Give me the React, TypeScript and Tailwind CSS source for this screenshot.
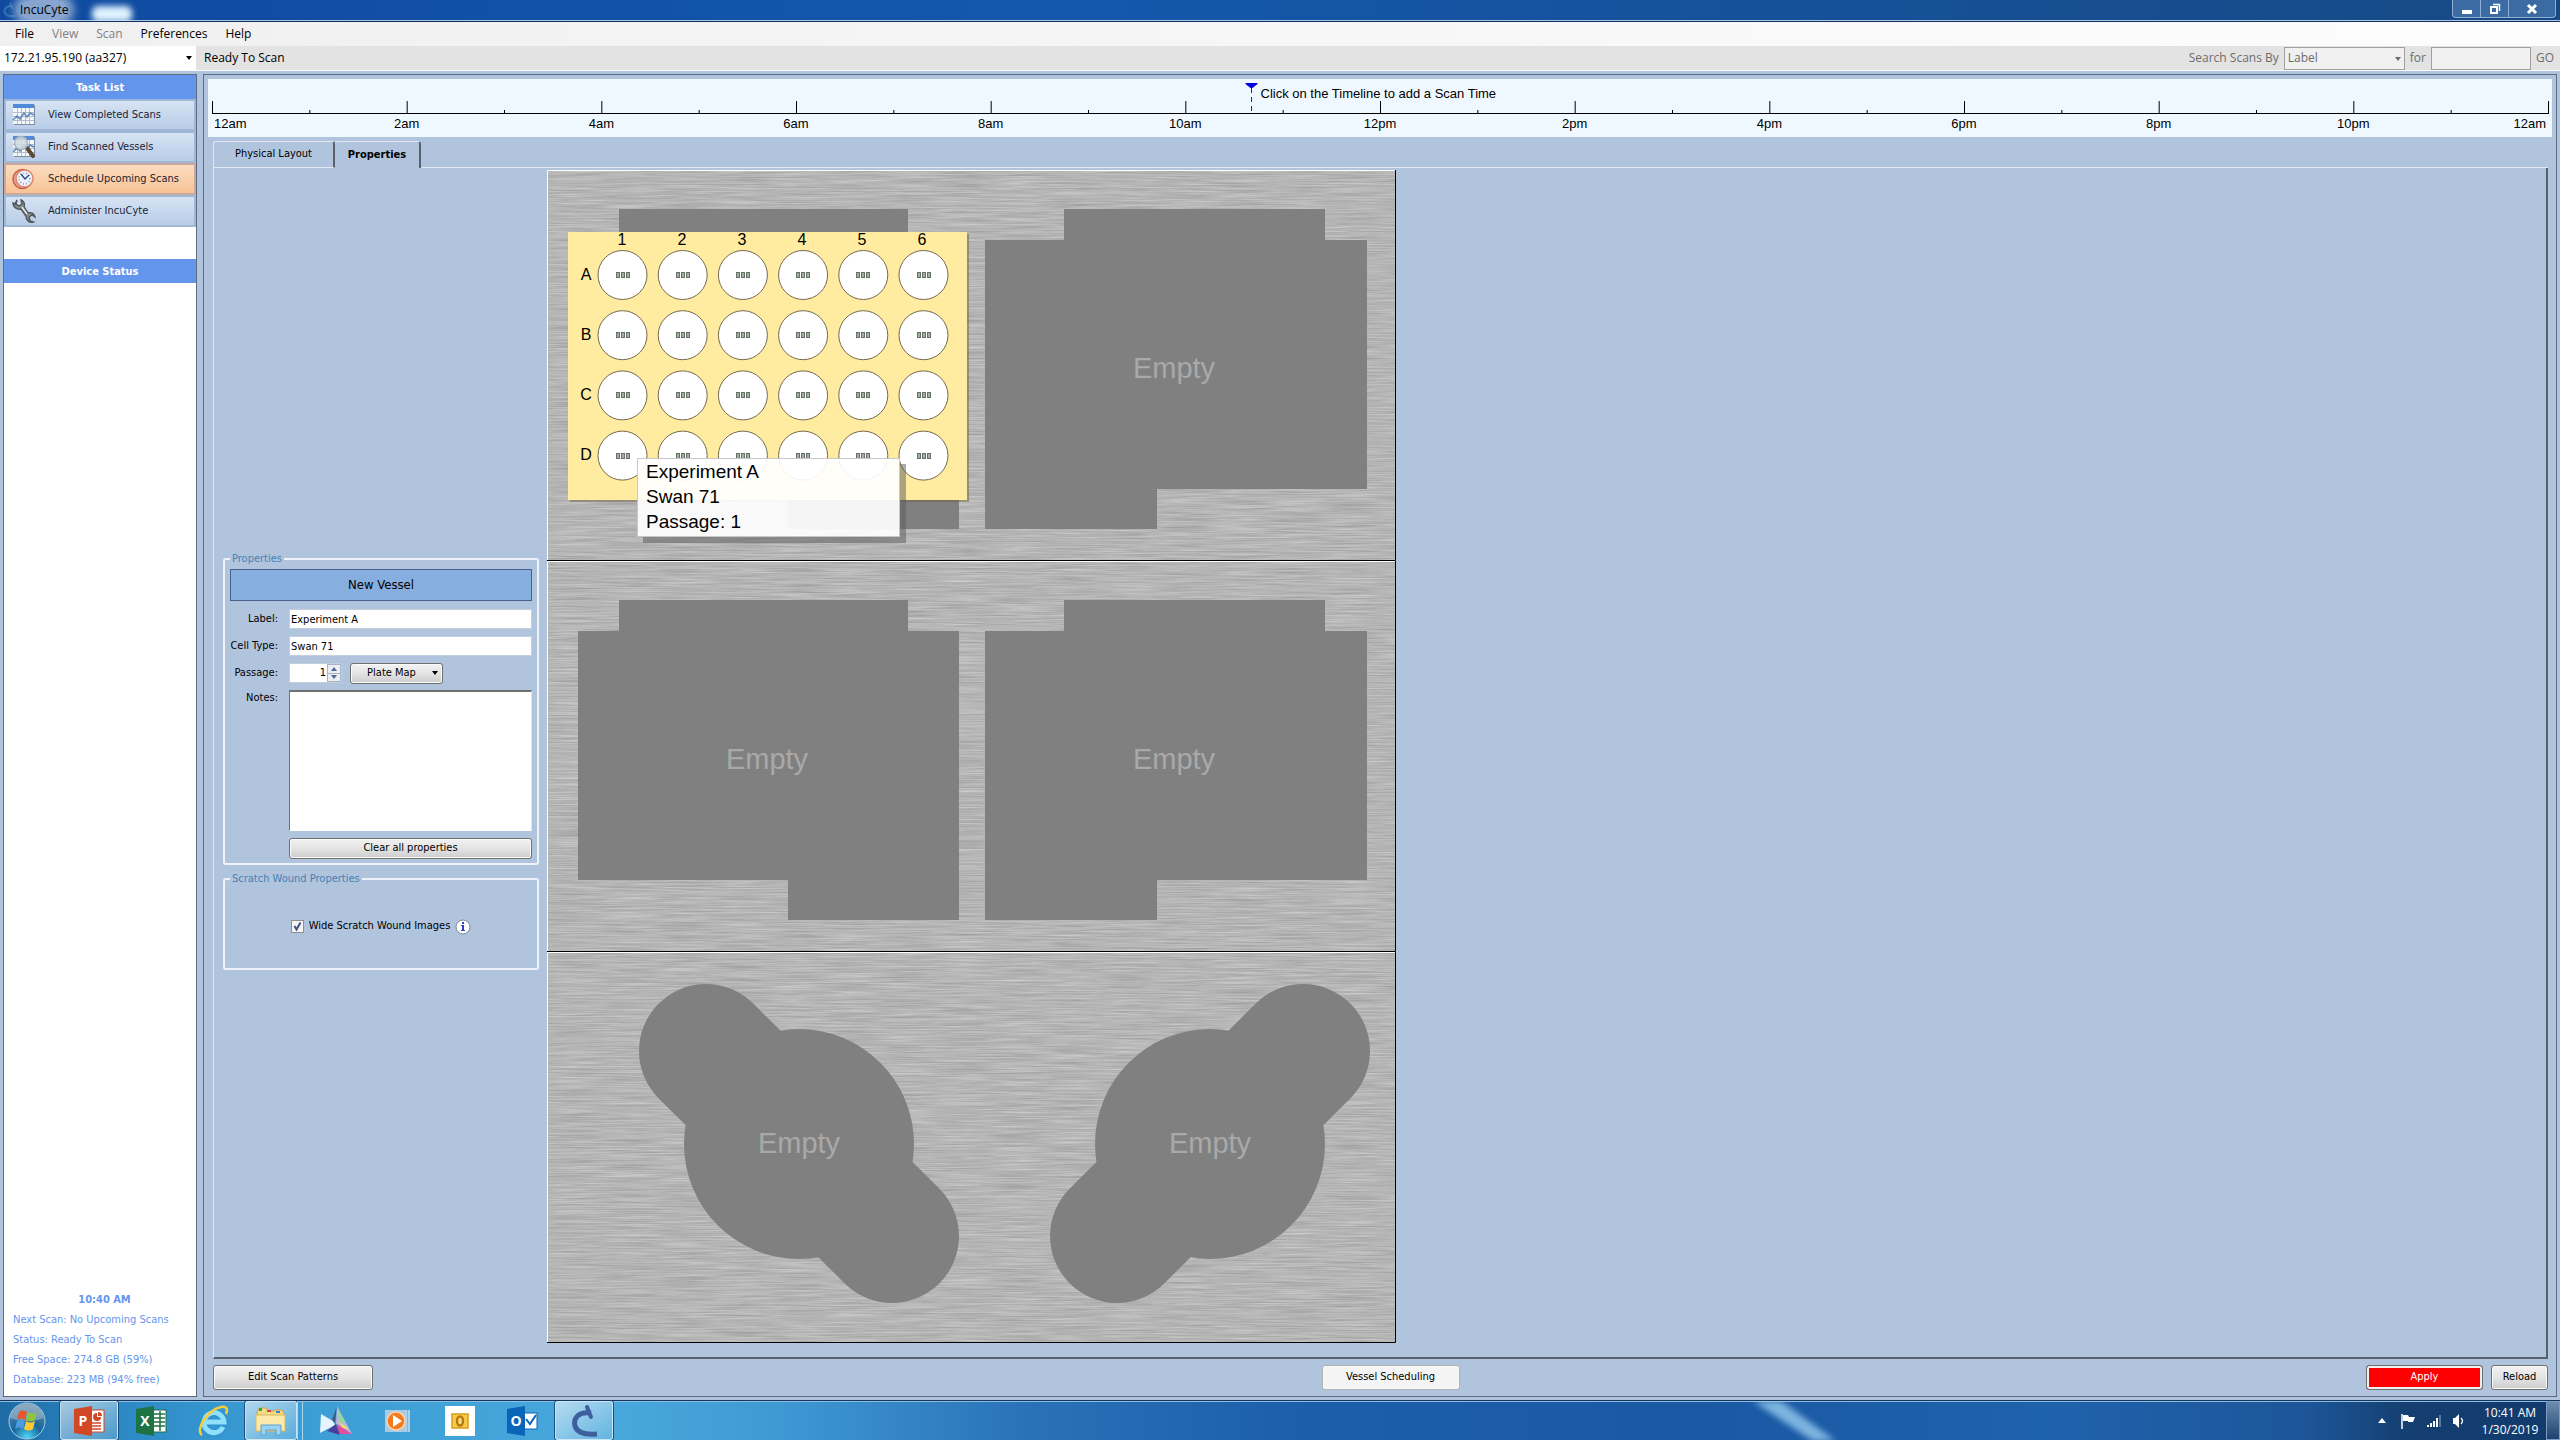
import React, { useState } from 'react';
import { cva } from 'class-variance-authority';
import { clsx } from 'clsx';

const buttonVariants = cva(
  'flex items-center justify-center rounded-[3px] border border-[#707070] shadow-[inset_0_0_0_1px_#fafafa] text-black',
  {
    variants: {
      variant: {
        default: 'bg-linear-to-b from-[#f2f2f2] via-[#e4e4e4] via-50% to-[#cdcdcd]',
        pale: 'bg-[#f4f4f4] border-[#adb2b5] text-[#444]',
        danger: 'bg-[#ff0000] text-white border-[#707070] shadow-[inset_0_0_0_2px_#f0f0f0]',
      },
    },
    defaultVariants: { variant: 'default' },
  }
);

const TAHOMA = "font-['DejaVu_Sans_Condensed','DejaVu_Sans',sans-serif]";
const SEGOE = "font-['Open_Sans','Noto_Sans',sans-serif]";
const ARIAL = "font-['Liberation_Sans',Arial,sans-serif]";

const MENUS = [
  { label: 'File', enabled: true },
  { label: 'View', enabled: false },
  { label: 'Scan', enabled: false },
  { label: 'Preferences', enabled: true },
  { label: 'Help', enabled: true },
];

const STATUS_LINES = [
  'Next Scan: No Upcoming Scans',
  'Status: Ready To Scan',
  'Free Space: 274.8 GB (59%)',
  'Database: 223 MB (94% free)',
];

const HOURS = Array.from({ length: 25 }, (_, i) => i);
const WELL_ROWS = ['A', 'B', 'C', 'D'];
const WELL_COLS = [1, 2, 3, 4, 5, 6];

const hourLabel = (hour: number) => {
  const h = hour % 12 === 0 ? 12 : hour % 12;
  return `${h}${hour % 24 < 12 ? 'am' : 'pm'}`;
};

/* ---------- Icons ---------- */

const ChartIcon: React.FC<{ magnifier?: boolean }> = ({ magnifier }) => (
  <svg width="24" height="24" viewBox="0 0 24 24" className="shrink-0">
    <rect x="2" y="2" width="21" height="20" fill="#7f8da0" />
    <rect x="1" y="1" width="21" height="20" fill="#f4f7fb" />
    <rect x="1" y="1" width="21" height="4" fill="#4f8bd8" />
    <path
      d="M1 9.5H22M1 13.5H22M1 17.5H22M5.5 5V21M9.5 5V21M13.5 5V21M17.5 5V21"
      stroke="#b4bccb"
      strokeWidth="1"
    />
    <path d="M1 17L5 13L8 16L12 10L15 14L18 10L22 12" fill="none" stroke="#5e86b8" strokeWidth="1.5" />
    {magnifier && (
      <>
        <path d="M15 13L21 21" stroke="#5c4a38" strokeWidth="4" strokeLinecap="round" />
        <circle cx="9" cy="8" r="6.5" fill="#cfdbe0" fillOpacity="0.85" stroke="#a9b4b8" strokeWidth="1.5" />
      </>
    )}
  </svg>
);

const ClockIcon = () => (
  <svg width="24" height="24" viewBox="0 0 24 24" className="shrink-0">
    <circle cx="10.5" cy="12" r="9.5" fill="#e9a58f" stroke="#c9604a" strokeWidth="1.5" />
    <circle cx="12.5" cy="11.5" r="8.5" fill="#eef3fb" stroke="#dd8671" strokeWidth="1.5" />
    <circle cx="12.5" cy="11.5" r="5.5" fill="none" stroke="#8494ad" strokeWidth="1.5" strokeDasharray="1 2" />
    <path d="M9 7L13 12L17 8" fill="none" stroke="#2e4b8f" strokeWidth="1.5" />
  </svg>
);

const WrenchIcon = () => (
  <svg width="24" height="24" viewBox="0 0 24 24" className="shrink-0">
    <path
      d="M5 1L4 5L7 7L10 5L9 1C12 2 13 5 12 8L16 14C19 13 22 14 23 18L20 16L17 18L18 22L21 23C17 24 14 21 14 17L9 10C5 11 1 8 1 4L3 5Z"
      fill="#8b8f92"
      stroke="#53575a"
      strokeWidth="1.5"
    />
    <path d="M10 8L15 15" stroke="#e3e6e8" strokeWidth="1.5" />
  </svg>
);

const InfoIcon = () => (
  <svg width="16" height="16" viewBox="0 0 16 16">
    <circle cx="8" cy="8" r="7" fill="#fff" stroke="#7c8794" strokeWidth="1" />
    <rect x="7" y="3" width="2" height="2" fill="#2a3fc4" />
    <path d="M6 6H9V11H10V12H6V11H7V7H6Z" fill="#2a3fc4" />
  </svg>
);

const StartOrb = () => (
  <svg width="40" height="38" viewBox="0 0 40 38">
    <defs>
      <radialGradient id="orb" cx="50%" cy="95%" r="90%">
        <stop offset="0" stopColor="#4fd6f5" />
        <stop offset="0.45" stopColor="#17669c" />
        <stop offset="1" stopColor="#5d86a8" />
      </radialGradient>
    </defs>
    <circle cx="20" cy="19" r="18" fill="url(#orb)" stroke="#a8cbe0" strokeWidth="1" />
    <path d="M3 16C5 6 12 2 20 2S35 6 37 16C28 20 12 20 3 16Z" fill="#fff" fillOpacity="0.3" />
    <path d="M12 10C14 8 17 8 20 10L18 18C15 16 13 16 10 18Z" fill="#e8562a" />
    <path d="M21 10C24 12 27 12 30 10L28 18C25 20 22 20 19 18Z" fill="#8fc43f" />
    <path d="M10 19C13 17 15 17 18 19L16 27C13 25 11 25 8 27Z" fill="#4a9be0" />
    <path d="M19 19C22 21 25 21 28 19L26 27C23 29 20 29 17 27Z" fill="#fbc935" />
  </svg>
);

const OfficeIcon: React.FC<{ letter: string; color: string; children: React.ReactNode }> = ({
  letter,
  color,
  children,
}) => (
  <svg width="32" height="32" viewBox="0 0 32 32">
    {children}
    <path d="M1 4L19 1V31L1 28Z" fill={color} />
    <text
      x="10"
      y="21"
      textAnchor="middle"
      className="font-['Open_Sans',sans-serif] text-[14px] font-bold"
      fill="#fff"
    >
      {letter}
    </text>
  </svg>
);

const PowerPointIcon = () => (
  <OfficeIcon letter="P" color="#d24726">
    <rect x="17" y="5" width="14" height="22" fill="#fff" stroke="#d24726" />
    <path d="M19 18H28M19 21H28M19 24H28" stroke="#d24726" strokeWidth="1.5" />
    <path d="M24 8A4 4 0 1 0 28 12H24Z" fill="#d24726" />
    <path d="M25 7V11H29A4 4 0 0 0 25 7Z" fill="#d24726" />
  </OfficeIcon>
);

const ExcelIcon = () => (
  <OfficeIcon letter="X" color="#1f7244">
    <rect x="17" y="5" width="14" height="22" fill="#fff" stroke="#1f7244" />
    <path d="M19 9H30M19 13H30M19 17H30M19 21H30M25 6V26" stroke="#1f7244" strokeWidth="1.5" />
  </OfficeIcon>
);

const OutlookIcon = () => (
  <OfficeIcon letter="O" color="#0a64b8">
    <rect x="17" y="8" width="14" height="16" fill="#fff" stroke="#0a64b8" />
    <path d="M20 14L24 19L30 10" fill="none" stroke="#0a64b8" strokeWidth="2" />
  </OfficeIcon>
);

const ExplorerEIcon = () => (
  <svg width="32" height="32" viewBox="0 0 32 32">
    <path d="M26 22A10 10 0 1 1 27 17H9" fill="none" stroke="#2f8fd0" strokeWidth="7" />
    <path d="M26 22A10 10 0 1 1 27 17H9" fill="none" stroke="#8fe0fb" strokeWidth="5" />
    <path d="M5 30C-2 25 10 5 24 2C30 1 31 4 29 9" fill="none" stroke="#f4cf3a" strokeWidth="2.5" />
  </svg>
);

const FoldersIcon = () => (
  <svg width="32" height="32" viewBox="0 0 32 32">
    <path d="M2 8L4 3H11L13 6H19L20 5H27L29 8V26H2Z" fill="#f3d983" stroke="#c9a64b" />
    <rect x="4" y="3" width="3" height="3" fill="#3aa648" />
    <rect x="12" y="5" width="4" height="2" fill="#d9472b" />
    <rect x="21" y="6" width="4" height="2" fill="#3b80c8" />
    <path d="M1 10H30V26H1Z" fill="#fbeaa9" stroke="#d9ba62" />
    <path d="M6 30V20H26V30H21V25H11V30Z" fill="#9bd2f2" stroke="#5ba2d0" />
  </svg>
);

const PrismIcon = () => (
  <svg width="34" height="32" viewBox="0 0 34 32">
    <path d="M18 1L16 17L1 27L13 15Z" fill="#3c5a86" />
    <path d="M2 9L14 16L16 20L1 28Z" fill="#e7f3fb" />
    <path d="M18 1L33 29L17 19Z" fill="#bfb5da" />
    <path d="M19 5L27 18L20 17Z" fill="#8fdc9a" />
    <path d="M18 19L33 29H20Z" fill="#e14fa0" />
    <path d="M17 19L21 30L8 26Z" fill="#4b3f9c" />
    <path d="M20 17L30 24L24 23Z" fill="#f2e45a" />
  </svg>
);

const MediaIcon = () => (
  <svg width="28" height="28" viewBox="0 0 28 28">
    <path d="M6 3H26V25H6Z" fill="#7db9e0" />
    <path d="M22 3V25M25 3V25" stroke="#d7ecf8" />
    <rect x="1" y="3" width="20" height="22" fill="#a9cbe2" />
    <circle cx="12" cy="14" r="9" fill="#f07c22" stroke="#fbd3ac" strokeWidth="1.5" />
    <path d="M9 8L18 14L9 20Z" fill="#fff" />
  </svg>
);

const OldOutlookIcon = () => (
  <svg width="30" height="30" viewBox="0 0 30 30">
    <rect width="30" height="30" fill="#fff" />
    <rect x="7" y="8" width="16" height="14" fill="#f9c94a" stroke="#d99f1c" strokeWidth="1.5" />
    <ellipse cx="15" cy="15" rx="3" ry="4.5" fill="#fbe08a" stroke="#b97a0c" strokeWidth="2.5" />
  </svg>
);

const CyteIcon: React.FC<{ size?: number; color?: string }> = ({ size = 34, color = '#3d5f9d' }) => (
  <svg width={size} height={size} viewBox="0 0 34 34">
    <path d="M24 9C12 7 6 14 8 22C10 29 17 31 30 30" fill="none" stroke={color} strokeWidth="5" />
    <path d="M20 3L24 13" stroke={color} strokeWidth="4" strokeLinecap="round" />
  </svg>
);

const DropArrow: React.FC<{ className?: string }> = ({ className }) => (
  <svg width="6" height="4" viewBox="0 0 6 4" className={className}>
    <path d="M0 0H6L3 4Z" fill="currentColor" />
  </svg>
);

/* ---------- Window chrome ---------- */

const TitleBar = () => (
  <header className="flex h-[22px] items-start justify-between overflow-hidden border-b border-[#12305f] bg-linear-to-r from-[#0f4a9f] via-[#1358ad] via-40% to-[#174a85] shadow-[inset_0_-1px_0_#a9c4e4]">
    <div className="flex h-5 items-center">
      <span className="w-5 overflow-hidden pl-px">
        <CyteIcon size={16} color="#2f6db5" />
      </span>
      <h1 className="rounded-full bg-white/50 text-xs leading-5 text-black shadow-[0_0_8px_6px_rgba(255,255,255,0.5)]">
        IncuCyte
      </h1>
      <span className="mt-2 ml-6 h-4 w-10 rounded-md bg-[#dff3ff] blur-[3px]" />
    </div>
    <div className="mr-1 flex h-[18px] divide-x divide-[#8fb0d4] rounded-b-[4px] border border-t-0 border-[#8fb0d4] bg-[#3c6ba4] text-white">
      <button type="button" aria-label="Minimize" className="flex w-7 items-center justify-center">
        <svg width="12" height="12" viewBox="0 0 12 12">
          <rect x="1" y="7" width="10" height="4" fill="#fff" />
        </svg>
      </button>
      <button type="button" aria-label="Restore" className="flex w-7 items-center justify-center">
        <svg width="12" height="12" viewBox="0 0 12 12" fill="none" stroke="#fff">
          <path d="M4 1.5H10.5V8" strokeWidth="1.5" />
          <rect x="2" y="4" width="6" height="6" strokeWidth="2" />
        </svg>
      </button>
      <button type="button" aria-label="Close" className="flex w-[46px] items-center justify-center">
        <svg width="12" height="12" viewBox="0 0 12 12">
          <path d="M2 2L10 10M10 2L2 10" stroke="#fff" strokeWidth="3" />
        </svg>
      </button>
    </div>
  </header>
);

const MenuBar = () => (
  <nav className="flex h-6 items-center bg-linear-to-r from-[#f0f0f0] to-[#fdfdfd] pl-[6px] text-xs">
    {MENUS.map((menu) => (
      <button
        key={menu.label}
        type="button"
        disabled={!menu.enabled}
        className="px-[9px] text-black disabled:text-[#808080]"
      >
        {menu.label}
      </button>
    ))}
  </nav>
);

const Toolbar = () => (
  <div className="flex h-[25px] items-center justify-between border-b border-[#f8fbff] bg-[#e3e3e3] text-xs">
    <div className="flex h-full items-center gap-2">
      <div className="relative h-full w-[196px]">
        <select aria-label="Device" className="h-full w-full appearance-none bg-white pl-1 text-black">
          <option>172.21.95.190 (aa327)</option>
        </select>
        <DropArrow className="pointer-events-none absolute top-2.5 right-1" />
      </div>
      <span>Ready To Scan</span>
    </div>
    <div className="flex h-full items-center gap-[5px] pr-1.5 text-[#6d6d6d]">
      <label htmlFor="search-by">Search Scans By</label>
      <div className="relative">
        <select
          id="search-by"
          disabled
          className="block h-[23px] w-[121px] appearance-none border border-[#a0a0a0] bg-[#f0f0f0] pl-[3px]"
        >
          <option>Label</option>
        </select>
        <DropArrow className="pointer-events-none absolute top-2.5 right-1" />
      </div>
      <label htmlFor="search-for">for</label>
      <input id="search-for" disabled className="h-[23px] w-[100px] border border-[#a0a0a0] bg-[#f0f0f0]" />
      <button type="button" disabled>
        GO
      </button>
    </div>
  </div>
);

/* ---------- Sidebar ---------- */

const TASKS = [
  { label: 'View Completed Scans', icon: <ChartIcon /> },
  { label: 'Find Scanned Vessels', icon: <ChartIcon magnifier /> },
  { label: 'Schedule Upcoming Scans', icon: <ClockIcon /> },
  { label: 'Administer IncuCyte', icon: <WrenchIcon /> },
];

const SidebarHeading: React.FC<{ className?: string; children: React.ReactNode }> = ({ className, children }) => (
  <h2 className={clsx('h-6 bg-[#6495ed] text-center leading-[26px] font-bold text-white', className)}>{children}</h2>
);

const Sidebar = () => {
  const [active, setActive] = useState('Schedule Upcoming Scans');

  return (
    <aside className={clsx('flex w-[194px] shrink-0 flex-col border border-[#5d6b80] bg-white text-[11px]', TAHOMA)}>
      <SidebarHeading>Task List</SidebarHeading>
      {TASKS.map((task) => (
        <button
          key={task.label}
          type="button"
          onClick={() => setActive(task.label)}
          className={clsx(
            'flex h-8 items-center gap-3 border-2 pl-1.5 whitespace-nowrap text-[#1c2433]',
            active === task.label
              ? 'border-[#c9a99b] bg-linear-to-b from-[#fbdcc0] to-[#f8c394]'
              : 'border-[#9fb8d8] bg-linear-to-b from-[#d6e3f3] to-[#b8cde8]'
          )}
        >
          {task.icon}
          {task.label}
        </button>
      ))}
      <SidebarHeading className="mt-8">Device Status</SidebarHeading>
      <div className="mt-auto pb-1.5 pl-[9px] leading-5 text-[#6495ed]">
        <p className="text-center font-bold">10:40 AM</p>
        {STATUS_LINES.map((line) => (
          <p key={line} className="whitespace-nowrap">
            {line}
          </p>
        ))}
      </div>
    </aside>
  );
};

/* ---------- Timeline ---------- */

const Timeline = () => (
  <div className="bg-[#f0f8ff] px-1">
    <svg className={clsx('block h-[58px] w-full overflow-visible text-[13px]', ARIAL)}>
      <rect x="0" y="34" width="100%" height="1" />
      {HOURS.map((hour) => {
        const x = `${(hour / 24) * 100}%`;
        const major = hour % 2 === 0;
        const anchor = hour === 0 ? 'start' : hour === 24 ? 'end' : 'middle';
        return (
          <g key={hour}>
            <rect x={x} y={major ? 22 : 31} width="1" height={major ? 13 : 4} />
            {major && (
              <text x={x} y="49" dx={hour === 0 ? 2 : hour === 24 ? -2 : 0} textAnchor={anchor}>
                {hourLabel(hour)}
              </text>
            )}
          </g>
        );
      })}
      <svg x="44.5%" y="4" className="overflow-visible">
        <path d="M-6 0H6V1L1 5H-1L-6 1Z" fill="#0000e0" />
        <path d="M0 5V31" stroke="#22228c" strokeDasharray="5 4" />
        <text x="9" y="15">
          Click on the Timeline to add a Scan Time
        </text>
      </svg>
    </svg>
  </div>
);

/* ---------- Vessel trays ---------- */

const LEFT_SLOT = 'M72 39H361V70H412V359H241V319H31V70H72Z';
const RIGHT_SLOT = 'M517 39H778V70H820V319H610V359H438V70H517Z';

const EmptyLabel: React.FC<{ x: number; y: number }> = ({ x, y }) => (
  <text x={x} y={y} textAnchor="middle" fill="#a9a9a9" className={clsx('text-[29px]', ARIAL)}>
    Empty
  </text>
);

const Tray: React.FC<{ children: React.ReactNode; seed: number }> = ({ children, seed }) => (
  <svg viewBox="0 0 849 391" className="block w-full">
    <defs>
      <filter id={`brushed-${seed}`} x="0" y="0" width="100%" height="100%" colorInterpolationFilters="sRGB">
        <feTurbulence type="fractalNoise" baseFrequency="0.018 0.7" numOctaves="3" seed={seed} />
        <feColorMatrix values="0.22 0 0 0 0.6  0.22 0 0 0 0.6  0.22 0 0 0 0.6  0 0 0 0 1" />
      </filter>
    </defs>
    <rect width="849" height="391" fill="#b5b5b5" filter={`url(#brushed-${seed})`} />
    <path d="M0.5 391V0.5H849" fill="none" stroke="#fff" />
    <path d="M848.5 0V390.5H0" fill="none" stroke="#000" />
    {children}
  </svg>
);

const WellPlate = () => (
  <g className={clsx('text-[16px]', ARIAL)}>
    <rect x="23" y="64" width="399" height="268" fill="#6b6240" fillOpacity="0.5" />
    <rect x="21" y="62" width="399" height="268" fill="#ffeca0" />
    {WELL_COLS.map((col, c) => (
      <text key={col} x={75 + c * 60} y="75" textAnchor="middle">
        {col}
      </text>
    ))}
    {WELL_ROWS.map((row, r) => (
      <g key={row}>
        <text x="39" y={110 + r * 60} textAnchor="middle">
          {row}
        </text>
        {WELL_COLS.map((col, c) => {
          const cx = 75.5 + c * 60.2;
          const cy = 105 + r * 60.2;
          return (
            <g key={col}>
              <circle cx={cx} cy={cy} r="24.5" fill="#fff" stroke="#75694f" />
              {[-5, 0, 5].map((dx) => (
                <rect
                  key={dx}
                  x={Math.round(cx) + dx - 1.5}
                  y={Math.round(cy) - 2.5}
                  width="3"
                  height="5"
                  fill="#a3aea3"
                  stroke="#657165"
                />
              ))}
            </g>
          );
        })}
      </g>
    ))}
  </g>
);

const DishSlot: React.FC<{ cx: number; flip?: boolean }> = ({ cx, flip }) => {
  const d = flip ? -93 : 93;
  return (
    <>
      <path
        d={`M${cx - d} 99L${cx + d} 284`}
        stroke="#808080"
        strokeWidth="134"
        strokeLinecap="round"
      />
      <circle cx={cx} cy="192" r="115" fill="#808080" />
      <EmptyLabel x={cx} y={201} />
    </>
  );
};

const VesselTrays = () => (
  <section className="relative w-[849px] shrink-0">
    <Tray seed={3}>
      <path d={`${LEFT_SLOT}${RIGHT_SLOT}`} fill="#808080" />
      <EmptyLabel x={627} y={208} />
      <WellPlate />
    </Tray>
    <Tray seed={8}>
      <path d={`${LEFT_SLOT}${RIGHT_SLOT}`} fill="#808080" />
      <EmptyLabel x={220} y={208} />
      <EmptyLabel x={627} y={208} />
    </Tray>
    <Tray seed={14}>
      <DishSlot cx={252} />
      <DishSlot cx={663} flip />
    </Tray>
    <div
      role="tooltip"
      className={clsx(
        'absolute top-[288px] left-[90px] w-[263px] border border-[#c8c8c8] bg-white/92 pb-0.5 pl-2 text-[19px] leading-[25px] text-black shadow-[6px_6px_0_rgba(90,90,90,0.5)]',
        ARIAL
      )}
    >
      <p>Experiment A</p>
      <p>Swan 71</p>
      <p>Passage: 1</p>
    </div>
  </section>
);

/* ---------- Properties form ---------- */

const PropertiesForm = () => {
  const [label, setLabel] = useState('Experiment A');
  const [cellType, setCellType] = useState('Swan 71');
  const [passage, setPassage] = useState(1);
  const [notes, setNotes] = useState('');
  const [wide, setWide] = useState(true);

  const clearAll = () => {
    setLabel('');
    setCellType('');
    setPassage(0);
    setNotes('');
  };

  const inputClass = 'h-5 w-full border border-[#c3cede] bg-white px-px text-black';

  return (
    <div className="flex w-[333px] shrink-0 flex-col justify-center gap-2 pt-2.5 pr-2 pl-[9px]">
      <fieldset className="rounded-[3px] border-2 border-[#eef3fa] px-[5px] pb-1">
        <legend className="px-0.5 leading-3 text-[#4682b4]">Properties</legend>
        <div className="mt-1 flex h-8 items-center justify-center border border-[#47628c] bg-[#86aede] text-[13px]">
          New Vessel
        </div>
        <div className="mt-2 grid grid-cols-[48px_1fr] gap-x-[11px] gap-y-[7px] text-right">
          <label htmlFor="label" className="leading-5">
            Label:
          </label>
          <input id="label" className={inputClass} value={label} onChange={(e) => setLabel(e.target.value)} />
          <label htmlFor="cell-type" className="leading-5 whitespace-nowrap">
            Cell Type:
          </label>
          <input id="cell-type" className={inputClass} value={cellType} onChange={(e) => setCellType(e.target.value)} />
          <label htmlFor="passage" className="leading-5">
            Passage:
          </label>
          <div className="flex h-5 items-center gap-2">
            <div className="flex h-5 w-[53px] border border-[#c3cede] bg-white">
              <input
                id="passage"
                className="w-[37px] pr-px text-right"
                value={passage}
                onChange={(e) => setPassage(Number(e.target.value) || 0)}
              />
              <div className="flex flex-1 flex-col gap-px bg-[#a8b4c6] p-px text-[#5468a0]">
                <button
                  type="button"
                  aria-label="Increase"
                  onClick={() => setPassage(passage + 1)}
                  className="flex flex-1 items-center justify-center bg-[#eceef2]"
                >
                  <DropArrow className="rotate-180" />
                </button>
                <button
                  type="button"
                  aria-label="Decrease"
                  onClick={() => setPassage(Math.max(0, passage - 1))}
                  className="flex flex-1 items-center justify-center bg-[#eceef2]"
                >
                  <DropArrow />
                </button>
              </div>
            </div>
            <button type="button" className={clsx(buttonVariants(), 'h-[21px] w-[93px] gap-4 pl-3')}>
              Plate Map
              <DropArrow />
            </button>
          </div>
          <label htmlFor="notes" className="leading-4">
            Notes:
          </label>
          <textarea
            id="notes"
            value={notes}
            onChange={(e) => setNotes(e.target.value)}
            className="block h-[141px] w-full resize-none border border-t-2 border-[#707070] border-r-[#e3e3e3] border-b-white bg-white p-1"
          />
          <button type="button" onClick={clearAll} className={clsx(buttonVariants(), 'col-start-2 h-[21px]')}>
            Clear all properties
          </button>
        </div>
      </fieldset>
      <fieldset className="rounded-[3px] border-2 border-[#eef3fa]">
        <legend className="ml-[5px] px-0.5 leading-3 text-[#4682b4]">Scratch Wound Properties</legend>
        <div className="flex h-[83px] items-center justify-center gap-[5px]">
          <span className="grid place-items-center">
            <input
              id="wide"
              type="checkbox"
              checked={wide}
              onChange={(e) => setWide(e.target.checked)}
              className="peer col-start-1 row-start-1 size-[13px] appearance-none border border-[#8e8f8f] bg-[#f4f4f4]"
            />
            <svg
              viewBox="0 0 11 11"
              className="pointer-events-none invisible col-start-1 row-start-1 size-[11px] peer-checked:visible"
            >
              <path d="M2.5 5L4.5 8.5L8.5 1.5" fill="none" stroke="#404e8c" strokeWidth="2" />
            </svg>
          </span>
          <label htmlFor="wide">Wide Scratch Wound Images</label>
          <InfoIcon />
        </div>
      </fieldset>
    </div>
  );
};

const TabBar = () => (
  <div role="tablist" className="flex h-[27px] text-black">
    <button
      type="button"
      role="tab"
      aria-selected={false}
      className="w-[122px] rounded-t-[3px] border border-r-2 border-[#dfe8f3] border-r-[#59616d]"
    >
      Physical Layout
    </button>
    <button
      type="button"
      role="tab"
      aria-selected
      className="w-[86px] rounded-t-[3px] border-t border-r-2 border-t-[#dfe8f3] border-r-[#59616d] font-bold"
    >
      Properties
    </button>
    <div className="flex-1 border-b border-[#dfe8f3]" />
  </div>
);

/* ---------- Taskbar ---------- */

const TaskbarButton: React.FC<{
  label: string;
  open?: boolean;
  className: string;
  children: React.ReactNode;
}> = ({ label, open, className, children }) => (
  <button
    type="button"
    aria-label={label}
    className={clsx(
      'flex h-full items-center justify-center',
      open &&
        'rounded-[3px] border border-[#d5ecf8]/80 bg-linear-to-br from-white/60 to-white/15 shadow-[0_0_0_1px_#1d4f7d]',
      className
    )}
  >
    {children}
  </button>
);

const Taskbar = () => (
  <footer className="relative flex h-10 justify-between overflow-hidden border-t border-[#12365f] bg-[linear-gradient(90deg,#1e6ba5_0%,#2a86c2_4%,#3a9cd4_10%,#48a8dc_24%,#3f9ad4_30%,#2a72b8_40%,#1d5fab_50%,#1a58a4_66%,#1f62ac_80%,#1d5699_90%,#143f70_94%,#123b6d_100%)] shadow-[inset_0_1px_0_#8fbfe0]">
    {/* light ray of the wallpaper showing through the glass */}
    <svg width="120" height="40" viewBox="0 0 120 40" className="absolute top-0 left-[68%]">
      <path d="M12 0H40L95 40H72Z" fill="#a6dcf8" fillOpacity="0.7" className="blur-[3px]" />
    </svg>
    <div className="flex">
      <TaskbarButton label="Start" className="w-[53px]">
        <StartOrb />
      </TaskbarButton>
      <TaskbarButton label="PowerPoint" open className="ml-[7px] w-[58px]">
        <PowerPointIcon />
      </TaskbarButton>
      <TaskbarButton label="Excel" className="ml-1 w-[58px]">
        <ExcelIcon />
      </TaskbarButton>
      <TaskbarButton label="Internet Explorer" className="ml-1 w-[58px]">
        <ExplorerEIcon />
      </TaskbarButton>
      <TaskbarButton label="Explorer" open className="ml-[3px] w-[52px]">
        <FoldersIcon />
      </TaskbarButton>
      <span className="w-[6px] border-x border-[#a8d5ee]" />
      <TaskbarButton label="Prism" className="ml-1 w-[58px]">
        <PrismIcon />
      </TaskbarButton>
      <TaskbarButton label="Media Player" className="ml-1 w-[58px]">
        <MediaIcon />
      </TaskbarButton>
      <TaskbarButton label="Office" className="ml-1 w-[58px]">
        <OldOutlookIcon />
      </TaskbarButton>
      <TaskbarButton label="Outlook" className="ml-1 w-[58px]">
        <OutlookIcon />
      </TaskbarButton>
      <TaskbarButton label="IncuCyte" open className="ml-1 w-[58px]">
        <CyteIcon />
      </TaskbarButton>
    </div>
    <div className="flex items-center gap-2.5 text-white">
      <svg width="8" height="5" viewBox="0 0 8 5">
        <path d="M0 5L4 0L8 5Z" fill="#fff" />
      </svg>
      <svg width="16" height="16" viewBox="0 0 16 16" className="ml-1">
        <path d="M2 1V16" stroke="#fff" strokeWidth="1.5" />
        <path d="M3 2H8L9 4H15L13 9H8V8H3Z" fill="#fff" />
      </svg>
      <svg width="16" height="14" viewBox="0 0 16 14" fill="#fff">
        <path d="M1 11H3V13H1ZM4 9H6V13H4ZM7 7H9V13H7ZM10 4H12V13H10Z" />
        <path d="M13 1H15V13H13Z" fillOpacity="0.3" />
      </svg>
      <svg width="14" height="14" viewBox="0 0 14 14">
        <path d="M1 4H3L7 0V14L3 10H1Z" fill="#fff" />
        <path d="M9 4Q12 7 9 10" fill="none" stroke="#fff" strokeWidth="1.2" />
      </svg>
      <div className="w-[68px] text-center text-xs leading-[17px]">
        <p>10:41 AM</p>
        <p>1/30/2019</p>
      </div>
      <button
        type="button"
        aria-label="Show desktop"
        className="-ml-2 h-full w-[14px] border border-[#7f9dbd] bg-linear-to-b from-[#6e8dae] to-[#1d426f]"
      />
    </div>
  </footer>
);

export default function App() {
  return (
    <div className={clsx('flex min-h-screen flex-col bg-[#b0c4de] text-black', SEGOE)}>
      <TitleBar />
      <MenuBar />
      <Toolbar />
      <div className="flex flex-1 gap-1.5 p-[3px]">
        <Sidebar />
        <main
          className={clsx('flex min-w-0 flex-1 flex-col border border-[#5d6b80] p-1 pb-1.5 text-[11px]', TAHOMA)}
        >
          <Timeline />
          <div className="mt-1 mr-1 ml-[5px] flex flex-1 flex-col">
            <TabBar />
            <div className="flex flex-1 border-r-2 border-b-2 border-l border-[#59616d] border-l-[#dfe8f3] pt-0.5 pb-[14px]">
              <PropertiesForm />
              <VesselTrays />
            </div>
            <div className="mt-1.5 grid grid-cols-[1fr_auto_1fr] items-center">
              <button type="button" className={clsx(buttonVariants(), 'h-[25px] w-40')}>
                Edit Scan Patterns
              </button>
              <button type="button" className={clsx(buttonVariants({ variant: 'pale' }), 'ml-5 h-[25px] w-[138px]')}>
                Vessel Scheduling
              </button>
              <div className="flex justify-end gap-2">
                <button type="button" className={clsx(buttonVariants({ variant: 'danger' }), 'h-[25px] w-[117px]')}>
                  Apply
                </button>
                <button type="button" className={clsx(buttonVariants(), 'h-[25px] w-[57px]')}>
                  Reload
                </button>
              </div>
            </div>
          </div>
        </main>
      </div>
      <Taskbar />
    </div>
  );
}
